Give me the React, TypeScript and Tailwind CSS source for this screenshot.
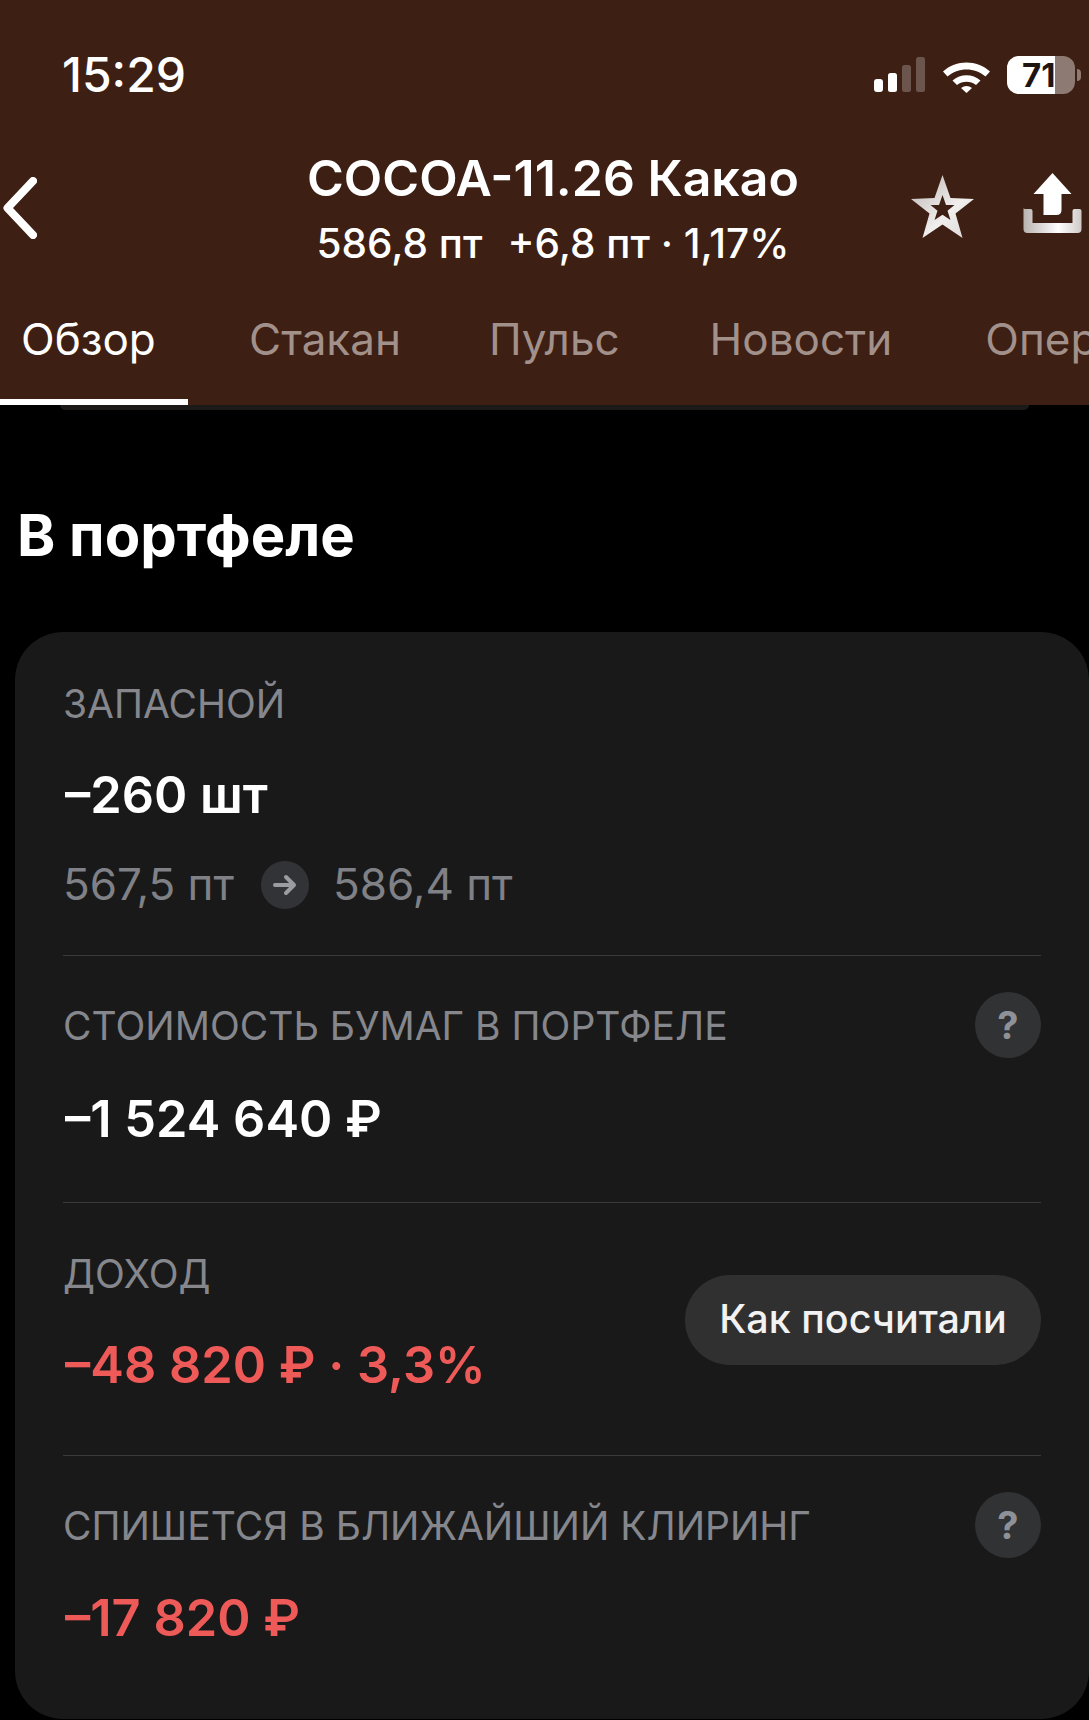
import React from "react";

const font = { fontFamily: '"Inter", "Liberation Sans", sans-serif' };

function Help() {
  return (
    <div className="flex h-[66px] w-[66px] shrink-0 items-center justify-center rounded-full bg-[#313233] text-[38px] font-bold text-[#8f9198]">?</div>
  );
}

function Label({ children }: { children: React.ReactNode }) {
  return <div className="pt-[2px] text-[39px] leading-[48px] text-[#85878d]">{children}</div>;
}

function Value({ children, red }: { children: React.ReactNode; red?: boolean }) {
  return (
    <div className={`pl-[2px] text-[50.5px] leading-[56px] font-semibold ${red ? "text-[#ee5a58]" : "text-white"}`}>{children}</div>
  );
}

export default function App() {
  return (
    <div style={font} className="h-[1720px] w-[1089px] overflow-hidden bg-black text-white">
      <header className="bg-[#3e1f14]">
        <div className="flex h-[150px] items-center pr-[8px] pl-[62px]">
          <span className="text-[48px] leading-none font-medium">15:29</span>
          <div className="ml-auto flex h-[38px] items-end">
            <svg width="133" height="38" viewBox="0 0 133 38" className="block">
              <rect x="0" y="23" width="9" height="13" rx="3" fill="#fff" />
              <rect x="14" y="17" width="9" height="19" rx="2.5" fill="#fff" />
              <rect x="28" y="9" width="9" height="27" rx="2.5" fill="#6c554c" />
              <rect x="42" y="1" width="9" height="35" rx="2.5" fill="#6c554c" />
              <g fill="#fff">
                <path d="M69 15.500 C82 3.500 103 3.500 116 15.500 L111.500 20.500 C101 11 84 11 73.500 20.500 Z" />
                <path d="M78.500 24.500 C86.500 17.500 98.500 17.500 106.500 24.500 L102 29 C96.500 24.800 88.500 24.800 83 29 Z" />
                <path d="M87 32 C90.500 29.300 94.500 29.300 98 32 L92.500 37 Z" />
              </g>
            </svg>
            <div className="relative h-[38px] w-[68px] overflow-hidden rounded-[12px] bg-[#8d7a72]">
              <div className="h-full w-[48px] bg-white" />
              <span className="absolute top-0 left-[15px] text-[33px] leading-[38px] font-bold text-[#1e1410]">71</span>
            </div>
            <div className="mb-[13px] ml-[2px] h-[12px] w-[4px] rounded-r-full bg-[#8d7a72]" />
          </div>
        </div>

        <div className="flex h-[125px] items-start pl-[3px]">
          <svg width="34" height="62" viewBox="0 0 34 62" className="mt-[27px] shrink-0">
            <path d="M30 4 L4.500 31 L30 58" fill="none" stroke="#fff" strokeWidth="8" strokeLinecap="round" strokeLinejoin="round" />
          </svg>
          <div className="ml-[272px] flex w-[488px] shrink-0 flex-col items-center">
            <div className="text-[50px] leading-[56px] font-semibold whitespace-nowrap">COCOA-11.26 Какао</div>
            <div className="mt-[16px] text-[40.5px] leading-[44px] font-medium whitespace-nowrap">
              586,8 пт<span className="ml-[25px]">+6,8 пт · 1,17%</span>
            </div>
          </div>
          <svg width="65" height="64" viewBox="0 0 64 64" className="mt-[25px] ml-[113px] shrink-0">
            <defs>
              <linearGradient id="starFill" x1="0" y1="0" x2="1" y2="1">
                <stop offset="0" stopColor="#b9b3b0" />
                <stop offset="0.6" stopColor="#f1efee" />
                <stop offset="1" stopColor="#d9d5d3" />
              </linearGradient>
            </defs>
            <path
              fillRule="evenodd"
              fill="url(#starFill)"
              d="M32 0 L40 23 L63.500 24 L45 38.500 L52 63 L32 49.500 L12 63 L19 38.500 L0.500 24 L24 23 Z M32 20 L28.500 30 L20 30 L27 35.800 L24 45 L32 39.800 L40 45 L37 35.800 L44 30 L35.500 30 Z"
            />
          </svg>
          <svg width="61" height="62" viewBox="0 0 60 62" className="mt-[23px] ml-[48px] shrink-0">
            <defs>
              <linearGradient id="shareFill" x1="0" y1="0" x2="1" y2="0">
                <stop offset="0" stopColor="#b8b2af" />
                <stop offset="0.6" stopColor="#ffffff" />
                <stop offset="1" stopColor="#cfcac8" />
              </linearGradient>
            </defs>
            <path d="M29 0 L48 21 L38 21 L38 37 Q38 42 33 42 L20 42 L20 21 L10 21 Z" fill="#fff" />
            <path d="M0 35 Q0 36 2 36 L7 36 Q9 36 9 38 L9 50 L49 50 L49 38 Q49 36 51 36 L56 36 Q58 36 58 38 L58 56 Q58 60 54 60 L4 60 Q0 60 0 56 Z" fill="url(#shareFill)" />
          </svg>
        </div>

        <nav className="flex h-[130px] text-[44px] leading-[52px] whitespace-nowrap text-[#a2918a]">
          <div className="w-[188px] shrink-0 border-b-[6px] border-white pt-[38px] pl-[21px] text-white">Обзор</div>
          <div className="ml-[61px] shrink-0 pt-[38px]">Стакан</div>
          <div className="ml-[88px] shrink-0 pt-[38px]">Пульс</div>
          <div className="ml-[90px] shrink-0 pt-[38px]">Новости</div>
          <div className="ml-[93px] shrink-0 pt-[38px]">Операции</div>
        </nav>
      </header>
      <div className="mx-[60px] h-[5px] rounded-b-[8px] bg-[#1b1a19]" />

      <h1 className="mt-[95px] ml-[17px] text-[58px] leading-[60px] font-bold">В портфеле</h1>

      <section className="mt-[67px] ml-[15px] rounded-[48px] bg-[#191919] px-[48px]">
        <div className="border-b border-[#3a3a3a] pt-[46px] pb-[46px]">
          <Label>ЗАПАСНОЙ</Label>
          <div className="mt-[39px]"><Value>–260 шт</Value></div>
          <div className="mt-[38px] flex h-[48px] items-center text-[44px] leading-[48px] text-[#7f8187]">
            <span className="-mt-[3px]">567,5 пт</span>
            <span className="ml-[27px] flex h-[48px] w-[48px] items-center justify-center rounded-full bg-[#323336]">
              <svg width="26" height="26" viewBox="0 0 26 26" fill="none" stroke="#9a9ca2" strokeWidth="4" strokeLinecap="round" strokeLinejoin="round">
                <path d="M3 13 H22 M14 5 L22 13 L14 21" />
              </svg>
            </span>
            <span className="-mt-[3px] ml-[24px]">586,4 пт</span>
          </div>
        </div>

        <div className="border-b border-[#3a3a3a] pt-[36px] pb-[55px]">
          <div className="flex h-[66px] items-center justify-between">
            <Label>СТОИМОСТЬ БУМАГ В ПОРТФЕЛЕ</Label>
            <Help />
          </div>
          <div className="mt-[33px]"><Value>–1 524 640 ₽</Value></div>
        </div>

        <div className="flex items-start justify-between border-b border-[#3a3a3a] pt-[45px] pb-[62px]">
          <div>
            <Label>ДОХОД</Label>
            <div className="mt-[39px]"><Value red>–48 820 ₽ · 3,3%</Value></div>
          </div>
          <button className="mt-[27px] flex h-[90px] w-[356px] items-center justify-center rounded-full bg-[#303030] text-[39.500px] font-medium text-[#f2f2f2]">Как посчитали</button>
        </div>

        <div className="pt-[36px] pb-[73px]">
          <div className="flex h-[66px] items-center justify-between">
            <Label>СПИШЕТСЯ В БЛИЖАЙШИЙ КЛИРИНГ</Label>
            <Help />
          </div>
          <div className="mt-[32px]"><Value red>–17 820 ₽</Value></div>
        </div>
      </section>
    </div>
  );
}
